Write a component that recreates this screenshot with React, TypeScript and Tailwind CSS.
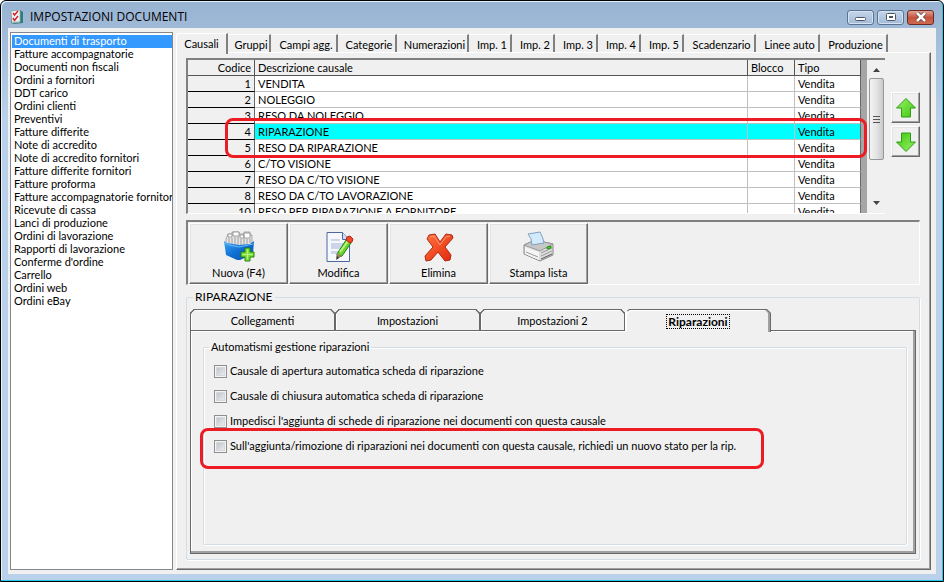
import { useState } from "react";

const DOCUMENTI = [
  "Documenti di trasporto",
  "Fatture accompagnatorie",
  "Documenti non fiscali",
  "Ordini a fornitori",
  "DDT carico",
  "Ordini clienti",
  "Preventivi",
  "Fatture differite",
  "Note di accredito",
  "Note di accredito fornitori",
  "Fatture differite fornitori",
  "Fatture proforma",
  "Fatture accompagnatorie fornitori",
  "Ricevute di cassa",
  "Lanci di produzione",
  "Ordini di lavorazione",
  "Rapporti di lavorazione",
  "Conferme d'ordine",
  "Carrello",
  "Ordini web",
  "Ordini eBay",
];

const SCHEDE = [
  { label: "Gruppi", width: "w-[43px]" },
  { label: "Campi agg.", width: "w-[67px]" },
  { label: "Categorie", width: "w-[59px]" },
  { label: "Numerazioni", width: "w-[72px]" },
  { label: "Imp. 1", width: "w-[43px]" },
  { label: "Imp. 2", width: "w-[43px]" },
  { label: "Imp. 3", width: "w-[43px]" },
  { label: "Imp. 4", width: "w-[43px]" },
  { label: "Imp. 5", width: "w-[43px]" },
  { label: "Scadenzario", width: "w-[72px]" },
  { label: "Linee auto", width: "w-[64px]" },
  { label: "Produzione", width: "w-[68px]" },
];

const CAUSALI = [
  { codice: 1, descrizione: "VENDITA" },
  { codice: 2, descrizione: "NOLEGGIO" },
  { codice: 3, descrizione: "RESO DA NOLEGGIO" },
  { codice: 4, descrizione: "RIPARAZIONE" },
  { codice: 5, descrizione: "RESO DA RIPARAZIONE" },
  { codice: 6, descrizione: "C/TO VISIONE" },
  { codice: 7, descrizione: "RESO DA C/TO VISIONE" },
  { codice: 8, descrizione: "RESO DA C/TO LAVORAZIONE" },
  { codice: 10, descrizione: "RESO PER RIPARAZIONE A FORNITORE" },
];

const OPZIONI = [
  "Causale di apertura automatica scheda di riparazione",
  "Causale di chiusura automatica scheda di riparazione",
  "Impedisci l'aggiunta di schede di riparazione nei documenti con questa causale",
  "Sull'aggiunta/rimozione di riparazioni nei documenti con questa causale, richiedi un nuovo stato per la rip.",
];

function AppIcon() {
  return (
    <svg width="14" height="16" viewBox="0 0 14 16">
      <path d="M1 2 10 1 13 3V14L4 15 1 14Z" fill="#2f7f7c" />
      <path d="M1 2 10 1V13L2 14Z" fill="#f4f6f6" stroke="#8ba5a5" strokeWidth=".7" />
      <path d="m3 4 1.500 2L8 2M3 9l1.500 2.500L8 7" fill="none" stroke="#d1222d" strokeWidth="1.500" />
      <path d="M3 13h7" stroke="#aab" />
    </svg>
  );
}

function NuovaIcon() {
  return (
    <svg width="32" height="32" viewBox="0 0 32 32">
      <defs>
        <linearGradient id="box" x1="0" y1="0" x2="1" y2="1">
          <stop offset="0" stopColor="#3ba3f2" />
          <stop offset=".5" stopColor="#0f6fd2" />
          <stop offset="1" stopColor="#0850a8" />
        </linearGradient>
      </defs>
      <path d="M3 13V8l2-5h4V1h7v2h5V1h6v3h2v9l-12 3Z" fill="#e4e4e4" stroke="#999" strokeWidth=".8" />
      <path d="M5 3h4v3H5ZM10 1h6v4h-6ZM17 4h4v3h-4ZM21 2h6v5h-6Z" fill="#fff" stroke="#8b8b8b" strokeWidth=".8" />
      <path d="M6 7v6M9 7v6M12 6v8M15 6v8M18 8v6M21 8v6M24 8v5M27 8v4" fill="none" stroke="#a0a0a0" />
      <path d="m1 10 3 2 12 2 11-1 4-3-1 13-13 6h-3L3 24Z" fill="url(#box)" />
      <path d="m2 12 4 2 10 2 14-3" fill="none" stroke="#69bcfb" />
      <path d="M22 17h5v4h4v5h-4v4h-5v-4h-4v-5h4Z" fill="#7be03a" stroke="#25810d" />
      <path d="M24.500 18.500v10M19.500 23.500h10" stroke="#baf580" />
    </svg>
  );
}

function ModificaIcon() {
  return (
    <svg width="32" height="32" viewBox="0 0 32 32">
      <path d="M4 1.500h15.500l7 7v22H4Z" fill="#f6f8fd" stroke="#4c68a3" />
      <path d="M19.500 1.500v7h7" fill="#cfe0f5" stroke="#4c68a3" />
      <path d="M8 8h9v2H8ZM8 12h14v6H8ZM8 20h8v3H8Z" fill="#ccd5e9" />
      <path d="m14 23 9-14 5 3-9 13-5 2Z" fill="#69d42e" stroke="#277f14" />
      <path d="m17 21 8-11" stroke="#b9f482" strokeWidth="2" />
      <path d="m23 9 1-3 3-1 3 3-1 3-2 1Z" fill="#ed4a30" stroke="#b82513" />
      <path d="m14 22 5 3-5 3Z" fill="#a07c68" />
      <path d="m14 25-1 4 3-2Z" fill="#333" />
    </svg>
  );
}

function EliminaIcon() {
  return (
    <svg width="32" height="32" viewBox="0 0 32 32">
      <defs>
        <linearGradient id="cross" x1="0" y1="0" x2="1" y2="1">
          <stop offset="0" stopColor="#ff7440" />
          <stop offset="1" stopColor="#e2270b" />
        </linearGradient>
      </defs>
      <path
        d="m6 4 6-1 5 8 6-8 6 1 1 3-8 9 6 8-1 5-5 1-7-9-7 8-5 1-1-5 8-9-6-8Z"
        fill="url(#cross)"
        stroke="#b32810"
        strokeLinejoin="round"
      />
      <path d="m7 6 4-1 6 9 6-8 4-1" fill="none" stroke="#ff9b72" />
    </svg>
  );
}

function StampaIcon() {
  return (
    <svg width="32" height="32" viewBox="0 0 32 32">
      <path d="m1 14 11-5 18 4v11l-13 6-16-7Z" fill="#ddd" stroke="#888" />
      <path d="m1 14 11-5 18 4-13 7Z" fill="#c7c7c7" stroke="#999" />
      <path d="m5 3 12-2q3 5 4 11l-12 2Q9 7 5 3Z" fill="#d3e9fc" stroke="#7f9fc0" />
      <path d="m2 16 14 5v8L2 23Z" fill="#f5f5f5" />
      <path d="m3 21 12 5M18 22l11-5M18 25l11-5" stroke="#999" />
      <path d="m18 28 11-5" stroke="#555" />
      <path d="m24 16 4-1v2l-4 1Z" fill="#46d32a" stroke="#289516" />
    </svg>
  );
}

function ArrowIcon({ down = false }: { down?: boolean }) {
  return (
    <svg width="22" height="22" viewBox="0 0 22 22" className={down ? "rotate-180" : ""}>
      <defs>
        <linearGradient id="arrow" x1="0" y1="0" x2="1" y2="1">
          <stop offset="0" stopColor="#9af266" />
          <stop offset="1" stopColor="#3cc710" />
        </linearGradient>
      </defs>
      <path d="m11 1.500 9.500 9.500h-5v9h-9v-9h-5Z" fill="url(#arrow)" stroke="#2f9c14" strokeLinejoin="round" />
    </svg>
  );
}

const COMANDI = [
  { label: "Nuova (F4)", Icon: NuovaIcon },
  { label: "Modifica", Icon: ModificaIcon },
  { label: "Elimina", Icon: EliminaIcon },
  { label: "Stampa lista", Icon: StampaIcon },
];

const captionButton =
  "flex h-[15px] w-[27px] items-center justify-center rounded-[3px] border border-[#5b7390] bg-linear-to-b from-[#c3d5ea] to-[#a3bbd8] shadow-[inset_0_0_0_1px_#d5e2f1]";
const raised =
  "border border-t-white border-l-white border-r-[#696969] border-b-[#696969] shadow-[inset_-1px_-1px_0_#a0a0a0,inset_1px_1px_0_#e3e3e3]";

function TitleBar() {
  return (
    <header className="flex h-[26px] items-center px-[9px] pt-[6px]">
      <AppIcon />
      <h1 className="ml-[6px] flex-1 font-['Open_Sans',sans-serif] text-[12px] leading-4">
        IMPOSTAZIONI DOCUMENTI
      </h1>
      <div className="flex gap-[3px]">
        <button aria-label="Riduci" className={captionButton}>
          <svg width="12" height="10" viewBox="0 0 12 10">
            <rect x=".5" y="5.500" width="10" height="3" rx="1" fill="#fff" stroke="#4c5663" />
          </svg>
        </button>
        <button aria-label="Ingrandisci" className={captionButton}>
          <svg width="12" height="10" viewBox="0 0 12 10">
            <rect x="1.500" y="1.500" width="9" height="7" rx="1" fill="#fff" stroke="#4c5663" />
            <rect x="4.500" y="4.500" width="3" height="1" fill="#9ab" stroke="#4c5663" />
          </svg>
        </button>
        <button
          aria-label="Chiudi"
          className="flex h-[15px] w-[27px] items-center justify-center rounded-[3px] border border-[#6b2a22] bg-linear-to-b from-[#dfa196] via-[#c6523e] to-[#cc6a50]"
        >
          <svg width="12" height="10" viewBox="0 0 12 10">
            <path d="m2 1 8 8M10 1 2 9" stroke="#5b3a3a" strokeWidth="4" />
            <path d="m2 1 8 8M10 1 2 9" stroke="#fff" strokeWidth="2.500" />
          </svg>
        </button>
      </div>
    </header>
  );
}

function CausaliTable() {
  const [selected, setSelected] = useState(4);

  return (
    <div className="relative mr-[35px] flex h-[156px] border-t-2 border-l-2 border-b border-t-[#808080] border-l-[#808080] border-b-white">
      <div className="min-w-0 flex-1 overflow-hidden border-r-[6px] border-[#a6a6a6] bg-white">
        <table className="w-full table-fixed border-separate border-spacing-0 leading-[15px]">
          <colgroup>
            <col className="w-[67px]" />
            <col />
            <col className="w-[47px]" />
            <col className="w-[66px]" />
          </colgroup>
          <thead>
            <tr className="bg-[#f0f0f0] text-left *:border-r *:border-b *:border-[#555] *:px-[3px] *:py-0 *:font-normal">
              <th className="text-right">Codice</th>
              <th>Descrizione causale</th>
              <th>Blocco</th>
              <th>Tipo</th>
            </tr>
          </thead>
          <tbody>
            {CAUSALI.map((c) => (
              <tr
                key={c.codice}
                onClick={() => setSelected(c.codice)}
                className={`*:border-r *:border-b *:px-[3px] *:py-0 ${c.codice === selected ? "bg-[#00ffff]" : "bg-white"}`}
              >
                <td className="border-r-[#696969] border-b-black bg-[#f0f0f0] text-right">{c.codice}</td>
                <td className="border-[#c0c0c0] whitespace-nowrap">{c.descrizione}</td>
                <td className="border-[#c0c0c0]" />
                <td className="border-r-[#696969] border-b-[#c0c0c0]">Vendita</td>
              </tr>
            ))}
          </tbody>
        </table>
      </div>

      {/* Scrollbar */}
      <div className="flex w-[18px] flex-col items-center bg-[#f0f0f0] px-[1px] py-2">
        <svg width="7" height="4" viewBox="0 0 7 4">
          <path d="M0 4 3.500 0 7 4Z" fill="#444" />
        </svg>
        <div className="mt-[6px] flex h-[82px] w-[15px] items-center justify-center rounded-xs border border-[#979797] bg-linear-to-r from-[#f3f3f3] via-[#e4e4e6] to-[#c9cacd]">
          <svg width="7" height="9" viewBox="0 0 7 9">
            <path d="M0 1.500h7M0 4.500h7M0 7.500h7" stroke="#555" />
          </svg>
        </div>
        <svg width="7" height="4" viewBox="0 0 7 4" className="mt-auto">
          <path d="M0 0h7L3.500 4Z" fill="#444" />
        </svg>
      </div>

      <div className="pointer-events-none absolute top-[58px] right-[18px] left-[37px] h-10 rounded-[8px] border-3 border-[#ed1c24]" />
    </div>
  );
}

function RiparazioniTab() {
  return (
    <fieldset className="min-w-0 flex-1 rounded-xs border border-[#d3dde6] px-[10px] shadow-[1px_1px_0_#fff,inset_1px_1px_0_#fff]">
      <legend className="-ml-[5px] px-[2px] leading-[14px]">Automatismi gestione riparazioni</legend>
      <div className="flex flex-col items-start gap-3 pt-[11px]">
        {OPZIONI.map((text, i) => (
          <label key={text} className="relative flex h-[13px] items-center gap-[3px] whitespace-nowrap">
            <input
              type="checkbox"
              className="size-[13px] appearance-none border border-[#8e8f8f] bg-linear-to-br from-[#b4bac4] to-[#f6f6f6] shadow-[inset_0_0_0_1px_#f4f4f4,inset_0_0_0_2px_#d5d8dc] checked:bg-[#3399ff]"
            />
            {text}
            {i === OPZIONI.length - 1 && (
              <span className="pointer-events-none absolute -top-3 -right-7 -bottom-4 -left-[14px] rounded-[8px] border-3 border-[#ed1c24]" />
            )}
          </label>
        ))}
      </div>
    </fieldset>
  );
}

export default function App() {
  const [documento, setDocumento] = useState(DOCUMENTI[0]);

  return (
    <div className="flex min-h-screen flex-col rounded-t-[6px] border border-black bg-[#b9d1ea] bg-linear-to-b from-[#98b3d2] via-[#b9d1ea] via-20% to-[#b9d1ea] font-[Lato,'Liberation_Sans',sans-serif] text-[11px] text-black shadow-[inset_-1px_-1px_0_#1fcbe8,inset_1px_1px_0_#e6f0fa]">
      <TitleBar />

      <main className="mx-[7px] mt-[1px] mb-[7px] flex flex-1 gap-[3px] bg-[#f0f0f0] pt-1 pr-[5px] pb-1 pl-[2px]">
        <ul className="w-[163px] shrink-0 overflow-hidden border border-[#828790] bg-white pt-[2px] pl-[1px]">
          {DOCUMENTI.map((d) => (
            <li key={d}>
              <button
                onClick={() => setDocumento(d)}
                className={`block h-[13px] w-full pb-[2px] pl-[2px] text-left leading-[11px] whitespace-nowrap ${d === documento ? "bg-[#3399ff] text-white" : ""}`}
              >
                {d}
              </button>
            </li>
          ))}
        </ul>

        <div className="flex min-w-0 flex-1 flex-col">
          <nav className="flex h-5 items-end">
            <button className="relative -mb-[2px] h-[21px] w-[52px] rounded-tl-[3px] border-t border-r-2 border-l border-white border-r-[#808080] bg-[#f0f0f0]">
              Causali
            </button>
            {SCHEDE.map((s) => (
              <button
                key={s.label}
                className={`h-[18px] border-t border-r-2 border-t-white border-r-[#808080] pt-[2px] pl-[5px] whitespace-nowrap ${s.width}`}
              >
                {s.label}
              </button>
            ))}
          </nav>

          <section className="flex flex-1 flex-col border border-t-white border-r-[#696969] border-b-[#696969] border-l-white pt-[5px] pr-[10px] pb-[9px] pl-[9px] shadow-[inset_-1px_-1px_0_#a0a0a0]">
            <div className="flex">
              <div className="min-w-0 flex-1">
                <CausaliTable />
              </div>
              <div className="-ml-[29px] flex flex-col gap-[3px] pt-[34px]">
                <button aria-label="Sposta su" className={`flex h-[31px] w-[29px] items-center justify-center ${raised}`}>
                  <ArrowIcon />
                </button>
                <button aria-label="Sposta giù" className={`flex h-[31px] w-[29px] items-center justify-center ${raised}`}>
                  <ArrowIcon down />
                </button>
              </div>
            </div>

            {/* Toolbar */}
            <div className="mt-[6px] flex gap-[1px] border-t-2 border-r border-b border-l-2 border-t-[#808080] border-r-white border-b-white border-l-[#808080] p-[1px] pb-0">
              {COMANDI.map(({ label, Icon }) => (
                <button key={label} className={`flex h-[61px] w-[99px] flex-col items-center pt-[7px] ${raised}`}>
                  <Icon />
                  <span className="mt-[2px] leading-4">{label}</span>
                </button>
              ))}
            </div>

            <fieldset className="mt-1 flex min-w-0 flex-1 flex-col rounded-xs border border-[#d3dde6] px-[3px] pb-[5px] shadow-[1px_1px_0_#fff]">
              <legend className="ml-[3px] px-[2px] text-[12px] leading-4">RIPARAZIONE</legend>
              <div className="flex h-[25px] items-end pt-[4px]">
                {["Collegamenti", "Impostazioni", "Impostazioni 2"].map((t) => (
                  <button
                    key={t}
                    className="h-[21px] w-[145px] rounded-t-[4px] border-t border-r border-l border-[#696969] pt-[2px] shadow-[inset_1px_1px_0_#fff] [corner-shape:bevel]"
                  >
                    {t}
                  </button>
                ))}
                <button className="relative -mb-[2px] flex h-[23px] w-[146px] items-center justify-center rounded-t-[4px] border-t border-r border-l border-t-[#696969] border-r-[#696969] border-l-white bg-[#f0f0f0] text-[12px] font-bold shadow-[inset_-2px_0_0_#a0a0a0,inset_1px_1px_0_#fff] [corner-shape:bevel]">
                  <span className="border border-dotted border-black px-[1px] leading-[13px]">Riparazioni</span>
                </button>
              </div>
              <div className="flex flex-1 flex-col border border-[#696969] pt-[9px] pr-[8px] pb-[8px] pl-[12px] shadow-[inset_-2px_-2px_0_#a0a0a0,inset_1px_1px_0_#fff]">
                <RiparazioniTab />
              </div>
            </fieldset>
          </section>
        </div>
      </main>
    </div>
  );
}
